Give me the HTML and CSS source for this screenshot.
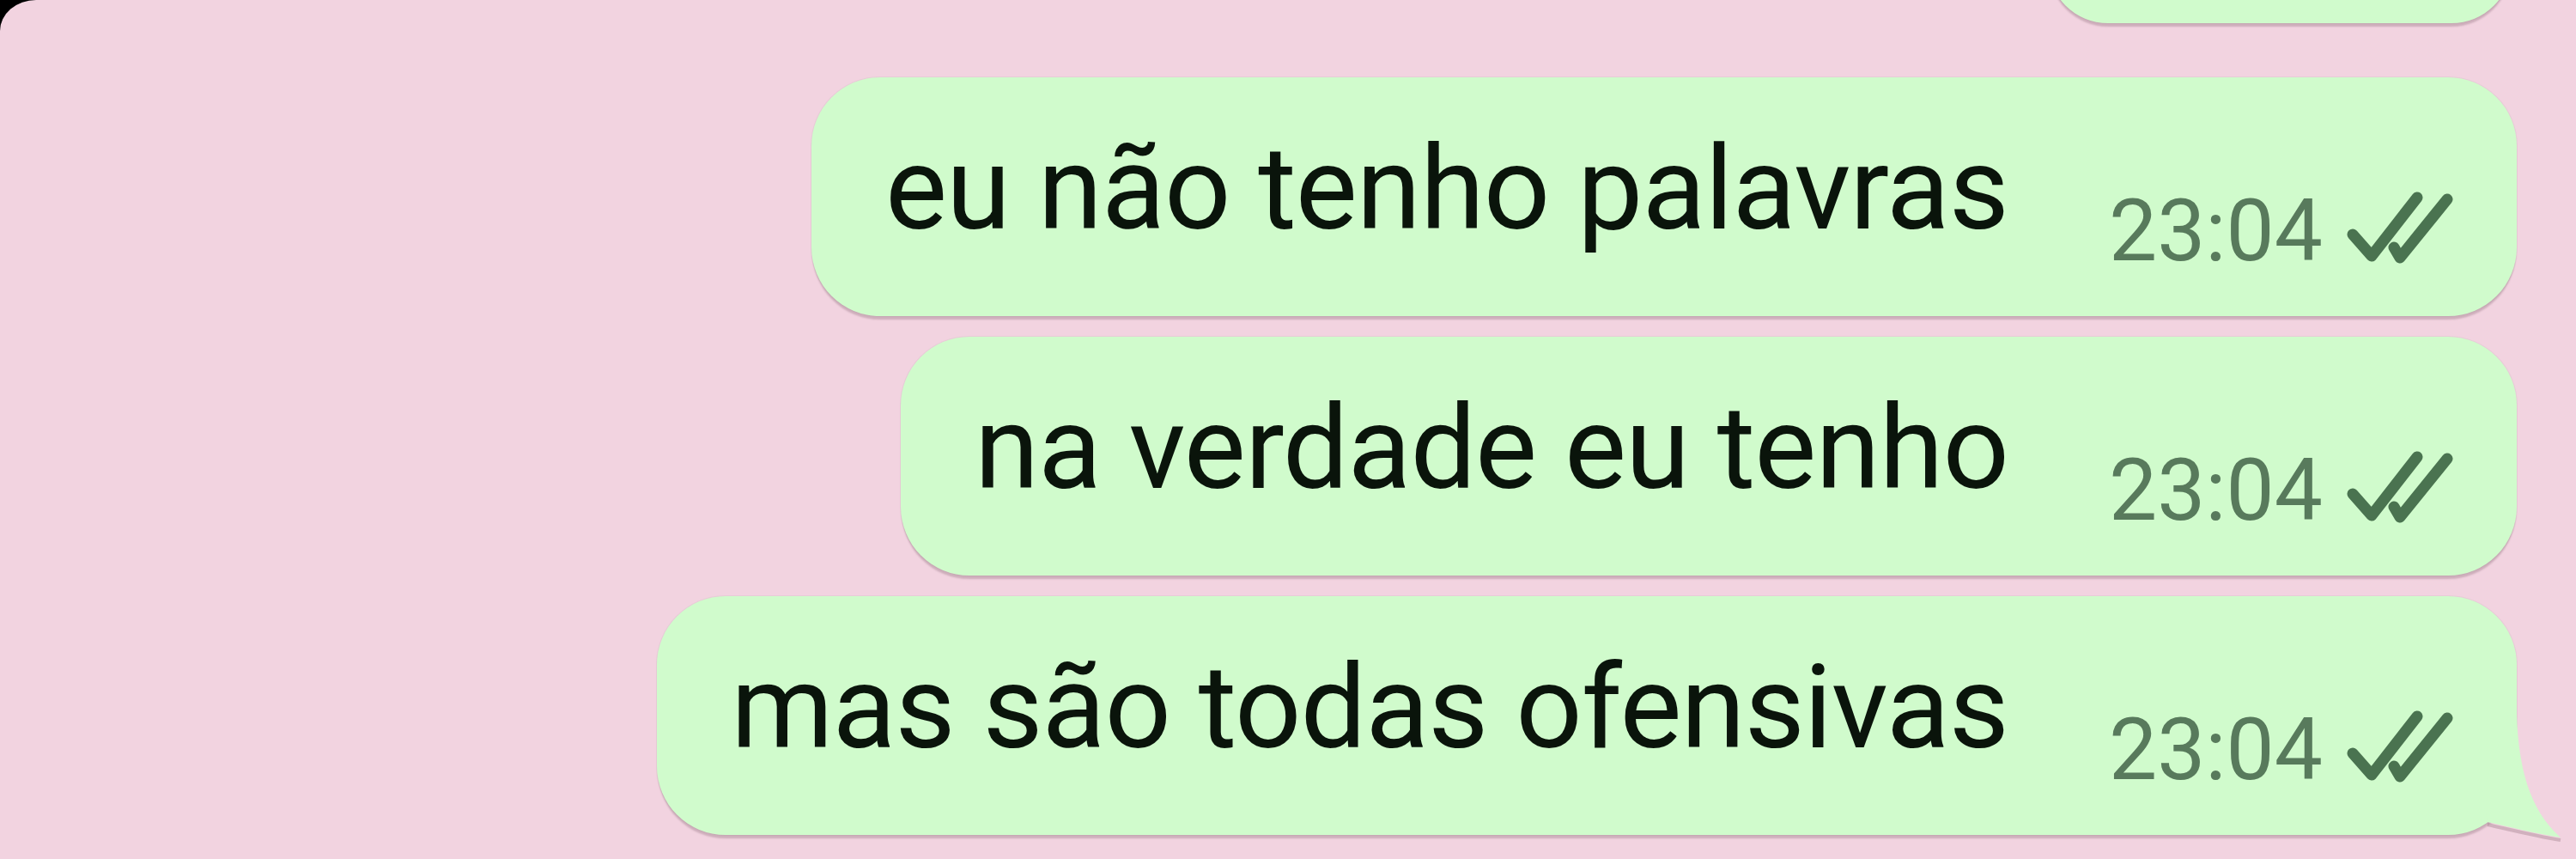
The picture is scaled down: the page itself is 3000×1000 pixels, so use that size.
FILE: index.html
```html
<!DOCTYPE html>
<html lang="pt">
<head>
    <meta charset="UTF-8">
    <meta name="viewport" content="width=device-width, initial-scale=1.0">
    <title>Conversa</title>
    <link rel="stylesheet" href="styles.css">
</head>
<body>
    <!-- Chat screen -->
    <main class="screen">
        <!-- previous message, cut off by the top of the screen -->
        <div class="bubble bubble-cut"></div>

        <div class="bubble bubble-first">
            <span class="msg">eu não tenho palavras</span>
            <span class="meta">
                <span class="time">23:04</span>
                <svg class="ticks" viewBox="0 0 130 90"><path d="M10 53 L32 78 L85 10 M58 68 L65 80 L120 12"/></svg>
            </span>
        </div>

        <div class="bubble">
            <span class="msg">na verdade eu tenho</span>
            <span class="meta">
                <span class="time">23:04</span>
                <svg class="ticks" viewBox="0 0 130 90"><path d="M10 53 L32 78 L85 10 M58 68 L65 80 L120 12"/></svg>
            </span>
        </div>

        <div class="bubble">
            <span class="msg">mas são todas ofensivas</span>
            <span class="meta">
                <span class="time">23:04</span>
                <svg class="ticks" viewBox="0 0 130 90"><path d="M10 53 L32 78 L85 10 M58 68 L65 80 L120 12"/></svg>
            </span>
            <!-- tail of the last bubble -->
            <svg class="tail" viewBox="0 0 130 170">
                <path class="tail-shadow" d="M26 138 C49 143 79 151 111 156"/>
                <path class="tail-fill" d="M50 10 L60 10 C62 70 74 120 111 153 C79 148 49 140 26 135 L20 100 Z"/>
            </svg>
        </div>
    </main>
</body>
</html>
```

FILE: styles.css
```css
/* General Reset */
* {
    margin: 0;
    padding: 0;
    box-sizing: border-box;
}

html, body {
    width: 3000px;
    height: 1000px;
    overflow: hidden;
}

body {
    background-color: #000;
    font-family: Roboto, "Liberation Sans", Arial, sans-serif;
}

/* Screen */
.screen {
    height: 1000px;
    display: flex;
    flex-direction: column;
    align-items: flex-end;
    gap: 24px;
    padding-right: 69px;
    background-color: #f2d3e0;
    border-top-left-radius: 42px 36px;
}

/* Bubbles */
.bubble {
    position: relative;
    display: flex;
    align-items: flex-start;
    padding: 62px 71px 49px 86px;
    background-color: #d0fbcc;
    border-radius: 80px;
    box-shadow: 0 5px 2px -1px rgba(90, 60, 70, 0.24), 0 0 0 1px rgba(120, 110, 110, 0.08);
}

.bubble-cut {
    width: 540px;
    height: 140px;
    margin-top: -113px;
    margin-right: 6px;
    padding: 0;
}

.bubble-first {
    margin-top: 39px;
}

.msg {
    font-size: 136px;
    line-height: 136px;
    letter-spacing: -1px;
    color: #0a140b;
    white-space: nowrap;
}

.meta {
    display: flex;
    align-items: flex-start;
    margin-top: 67px;
    margin-left: 117px;
}

.time {
    font-size: 100px;
    line-height: 100px;
    color: #587a5c;
}

.ticks {
    width: 130px;
    height: 90px;
    margin-left: 25px;
    margin-top: 1px;
}

.ticks path {
    fill: none;
    stroke: #4a7350;
    stroke-width: 13;
    stroke-linecap: round;
    stroke-linejoin: round;
}

/* Tail of the last bubble */
.tail {
    position: absolute;
    right: -70px;
    bottom: -20px;
    width: 130px;
    height: 170px;
}

.tail-shadow {
    fill: none;
    stroke: rgba(90, 60, 70, 0.22);
    stroke-width: 4;
}

.tail-fill {
    fill: #d0fbcc;
}
```
